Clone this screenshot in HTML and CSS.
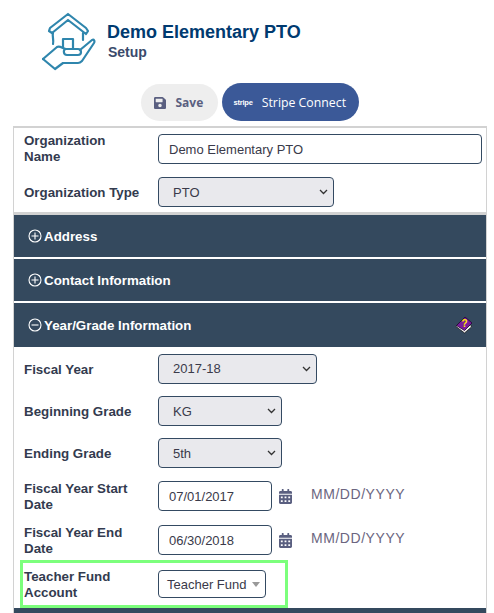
FILE: index.html
```html
<!DOCTYPE html>
<html lang="en">
<head>
<meta charset="utf-8">
<title>Setup</title>
<link rel="stylesheet" href="styles.css">
</head>
<body>
<header class="head">
  <svg class="logo" viewBox="0 0 54 60" fill="none" stroke="#2f86ad" stroke-width="2.200" stroke-linejoin="round" stroke-linecap="round">
    <path d="M8 16 L26 2 L44 16 L46 19 L44 22 L26 8 L10 21 L7 19 Z"/>
    <path d="M11 21 C10 24 12 28 11 32 M41 21 V28"/>
    <path d="M21 35 V27 H31 V37"/>
    <path d="M1 47 L15 35 C18 33 21 37 24 37 H36 C40 37 40 43 36 43 H25 C21 43 21 37 24 37"/>
    <path d="M38 38 L50 28 C52 27 53 29 52 31 L40 49 C39 50 38 51 36 51 H21 L13 57 L1 47"/>
  </svg>
  <div class="head-text">
    <h1 class="title">Demo Elementary PTO</h1>
    <div class="subtitle">Setup</div>
  </div>
</header>
<div class="actions">
  <button class="btn btn-save" type="button">
    <svg class="save-ico" viewBox="0 0 448 512"><path fill="#5a5f80" d="M433.900 129.900l-83.900-83.900A48 48 0 0 0 316.100 32H48C21.500 32 0 53.500 0 80v352c0 26.500 21.500 48 48 48h352c26.500 0 48-21.500 48-48V163.900a48 48 0 0 0-14.100-34zM224 416c-35.300 0-64-28.700-64-64s28.700-64 64-64 64 28.700 64 64-28.700 64-64 64zm96-304.500V212c0 6.600-5.400 12-12 12H76c-6.600 0-12-5.400-12-12V108c0-6.600 5.400-12 12-12h228.500c3.200 0 6.200 1.300 8.500 3.500l3.500 3.500c2.200 2.300 3.500 5.300 3.500 8.500z"/></svg>
    <span>Save</span>
  </button>
  <button class="btn btn-stripe" type="button"><span class="stripe-mark">stripe</span><span>Stripe Connect</span></button>
</div>
<main class="card">
  <div class="row row-name">
    <label class="lbl">Organization Name</label>
    <input class="field field-wide" type="text" value="Demo Elementary PTO">
  </div>
  <div class="row row-type">
    <label class="lbl">Organization Type</label>
    <select class="sel sel-type"><option>PTO</option></select>
  </div>
  <div class="bar">
    <svg class="circ" viewBox="0 0 14 14"><circle cx="7" cy="7" r="6" /><path d="M3.500 7h7M7 3.500v7"/></svg>
    <span>Address</span>
  </div>
  <div class="bar">
    <svg class="circ" viewBox="0 0 14 14"><circle cx="7" cy="7" r="6" /><path d="M3.500 7h7M7 3.500v7"/></svg>
    <span>Contact Information</span>
  </div>
  <div class="bar bar-open">
    <svg class="circ" viewBox="0 0 14 14"><circle cx="7" cy="7" r="6" /><path d="M3.500 7h7"/></svg>
    <span class="bar-label">Year/Grade Information</span>
    <svg class="book" viewBox="0 0 18 18">
      <path fill="#f0f0f0" stroke="#1c1c1c" stroke-width=".8" d="M1 10.500 L9.500 17 L16.500 11 L15.500 8.500 L9 13 L2 8.500 Z"/>
      <path fill="#7a1a9c" stroke="#20062e" stroke-width=".8" d="M1.500 9.500 L10 1 L17 7 L9.500 14.500 Z"/>
      <text class="book-q" x="6.500" y="11">?</text>
    </svg>
  </div>
  <div class="row row-fy">
    <label class="lbl">Fiscal Year</label>
    <select class="sel sel-fy"><option>2017-18</option></select>
  </div>
  <div class="row row-grade">
    <label class="lbl">Beginning Grade</label>
    <select class="sel sel-grade"><option>KG</option></select>
  </div>
  <div class="row row-grade">
    <label class="lbl">Ending Grade</label>
    <select class="sel sel-grade"><option>5th</option></select>
  </div>
  <div class="row row-date">
    <label class="lbl">Fiscal Year Start Date</label>
    <input class="field field-date" type="text" value="07/01/2017">
    <svg class="cal" viewBox="0 0 448 512"><path fill="#5a5f80" d="M0 464c0 26.500 21.500 48 48 48h352c26.500 0 48-21.500 48-48V192H0v272zm320-196c0-6.600 5.400-12 12-12h40c6.600 0 12 5.400 12 12v40c0 6.600-5.400 12-12 12h-40c-6.600 0-12-5.400-12-12v-40zm0 128c0-6.600 5.400-12 12-12h40c6.600 0 12 5.400 12 12v40c0 6.600-5.400 12-12 12h-40c-6.600 0-12-5.400-12-12v-40zM192 268c0-6.600 5.400-12 12-12h40c6.600 0 12 5.400 12 12v40c0 6.600-5.400 12-12 12h-40c-6.600 0-12-5.400-12-12v-40zm0 128c0-6.600 5.400-12 12-12h40c6.600 0 12 5.400 12 12v40c0 6.600-5.400 12-12 12h-40c-6.600 0-12-5.400-12-12v-40zM64 268c0-6.600 5.400-12 12-12h40c6.600 0 12 5.400 12 12v40c0 6.600-5.400 12-12 12H76c-6.600 0-12-5.400-12-12v-40zm0 128c0-6.600 5.400-12 12-12h40c6.600 0 12 5.400 12 12v40c0 6.600-5.400 12-12 12H76c-6.600 0-12-5.400-12-12v-40zM400 64h-48V16c0-8.800-7.200-16-16-16h-32c-8.800 0-16 7.200-16 16v48H160V16c0-8.800-7.200-16-16-16h-32c-8.800 0-16 7.200-16 16v48H48C21.500 64 0 85.500 0 112v48h448v-48c0-26.500-21.500-48-48-48z"/></svg>
    <span class="hint">MM/DD/YYYY</span>
  </div>
  <div class="row row-date">
    <label class="lbl">Fiscal Year End Date</label>
    <input class="field field-date" type="text" value="06/30/2018">
    <svg class="cal" viewBox="0 0 448 512"><path fill="#5a5f80" d="M0 464c0 26.500 21.500 48 48 48h352c26.500 0 48-21.500 48-48V192H0v272zm320-196c0-6.600 5.400-12 12-12h40c6.600 0 12 5.400 12 12v40c0 6.600-5.400 12-12 12h-40c-6.600 0-12-5.400-12-12v-40zm0 128c0-6.600 5.400-12 12-12h40c6.600 0 12 5.400 12 12v40c0 6.600-5.400 12-12 12h-40c-6.600 0-12-5.400-12-12v-40zM192 268c0-6.600 5.400-12 12-12h40c6.600 0 12 5.400 12 12v40c0 6.600-5.400 12-12 12h-40c-6.600 0-12-5.400-12-12v-40zm0 128c0-6.600 5.400-12 12-12h40c6.600 0 12 5.400 12 12v40c0 6.600-5.400 12-12 12h-40c-6.600 0-12-5.400-12-12v-40zM64 268c0-6.600 5.400-12 12-12h40c6.600 0 12 5.400 12 12v40c0 6.600-5.400 12-12 12H76c-6.600 0-12-5.400-12-12v-40zm0 128c0-6.600 5.400-12 12-12h40c6.600 0 12 5.400 12 12v40c0 6.600-5.400 12-12 12H76c-6.600 0-12-5.400-12-12v-40zM400 64h-48V16c0-8.800-7.200-16-16-16h-32c-8.800 0-16 7.200-16 16v48H160V16c0-8.800-7.200-16-16-16h-32c-8.800 0-16 7.200-16 16v48H48C21.500 64 0 85.500 0 112v48h448v-48c0-26.500-21.500-48-48-48z"/></svg>
    <span class="hint">MM/DD/YYYY</span>
  </div>
  <div class="row row-fund">
    <label class="lbl">Teacher Fund Account</label>
    <div class="combo"><span>Teacher Fund</span><i class="caret"></i></div>
  </div>
  <div class="bar bar-next"></div>
</main>
</body>
</html>
```
FILE: styles.css
```css
* { box-sizing: border-box; }
html, body { margin: 0; padding: 0; height: 613px; overflow: hidden; background: #fff; }
body { font-family: "Liberation Sans", Arial, sans-serif; font-size: 14px; color: #333b4f; }

.head { display: flex; align-items: center; height: 83px; padding: 0 0 2px 42px; }
.logo { width: 54px; height: 60px; margin-right: 11px; margin-top: 3px; flex: none; }
.head-text { padding-top: 2px; }
.title { margin: 0; font-size: 18px; line-height: 21px; font-weight: 700; color: #003a70; }
.subtitle { font-size: 14px; line-height: 19px; font-weight: 700; color: #3a4a6b; margin-left: 1px; }

.actions { display: flex; justify-content: center; align-items: flex-end; gap: 4px; height: 38px; margin-left: 5px; }
.btn { display: flex; align-items: center; border: 0; font-family: "Open Sans", sans-serif; cursor: pointer; padding: 0; }
.btn-save { width: 77px; height: 37px; border-radius: 19px; background: #eeeeee; color: #5a5f80; font-weight: 700; font-size: 12px; padding-left: 13px; gap: 10px; }
.save-ico { width: 12px; height: 14px; }
.btn-stripe { width: 137px; height: 38px; border-radius: 19px; background: #3b5998; color: #fff; font-size: 12.300px; padding-left: 12px; gap: 9px; }
.stripe-mark { font-family: "Liberation Sans", sans-serif; font-weight: 700; font-size: 7.500px; letter-spacing: -.2px; }

.card { margin: 5px 7px 0 13px; border: 2px solid #d2d2d2; border-bottom: 0; border-right-width: 1px; border-left-width: 1px; }
.row { display: flex; align-items: center; padding-left: 10px; }
.lbl { width: 134px; flex: none; font-weight: 700; font-size: 13.330px; line-height: 16px; color: #333b4f; padding: 2px 14px 0 0; }
.row-name { height: 42px; }
.row-name .lbl { padding-top: 0; }
.row-type { height: 45px; padding-top: 2px; border-bottom: 3px solid #d2d2d2; }

.field, .sel, .combo { height: 30px; border: 1px solid #344a62; border-radius: 4px; font-family: "Liberation Sans", Arial, sans-serif; font-size: 13px; color: #3a3a4a; }
.field { padding: 0 10px; background: #fff; outline: 0; }
.field-wide { width: 324px; }
.field-date { width: 114px; }
.sel {
  appearance: none;
  padding: 0 0 0 14px;
  background: #e9e9ed url("data:image/svg+xml,%3Csvg xmlns='http://www.w3.org/2000/svg' width='9' height='6'%3E%3Cpath d='M1 1l3.500 3.500L8 1' fill='none' stroke='%23333' stroke-width='1.300'/%3E%3C/svg%3E") no-repeat right 5px center;
}
.sel-type { width: 176px; }
.sel-fy { width: 159px; }
.sel-grade { width: 124px; }

.bar { display: flex; align-items: center; height: 42px; background: #34495e; color: #fff; font-weight: 700; font-size: 13.330px; padding-left: 14px; margin-bottom: 2px; gap: 2px; }
.bar-open { height: 44px; margin-bottom: 0; padding-right: 13px; }
.bar-label { flex: 1; }
.circ { width: 14px; height: 14px; fill: none; stroke: #fff; stroke-width: 1.100; flex: none; }
.book { width: 18px; height: 18px; flex: none; }
.book-q { font-size: 10px; font-weight: 700; fill: #ffe600; font-family: "Liberation Sans", sans-serif; }

.row-fy { height: 43px; }
.row-grade { height: 42px; }
.row-date { height: 44px; }
.cal { width: 13px; height: 15px; margin-left: 7px; }
.hint { font-size: 14px; letter-spacing: .55px; color: #6b6580; margin-left: 19px; margin-top: -5px; }

.row-fund { width: 268px; height: 48px; margin: -2px 0 0 6px; padding-left: 1px; border: 3px solid #7cff7c; }
.combo { display: flex; align-items: center; width: 108px; height: 28px; padding-left: 8px; background: #fff; gap: 5px; white-space: nowrap; font-size: 13px; }
.caret { width: 0; height: 0; border-left: 4px solid transparent; border-right: 4px solid transparent; border-top: 5px solid #999; }
.bar-next { height: 6px; margin: 0; }
```
